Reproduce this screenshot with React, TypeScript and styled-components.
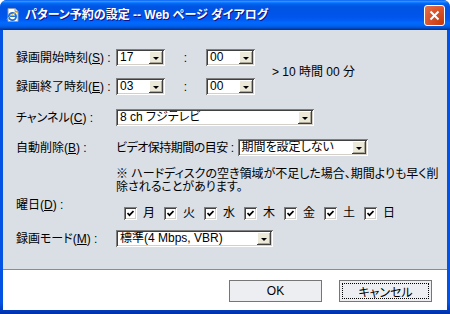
import React from "react";
import styled, { createGlobalStyle } from "styled-components";

const Global = createGlobalStyle`
  html, body { margin: 0; padding: 0; background: #ffffff; }
  body {
    font-family: "Liberation Sans", "Noto Sans CJK JP", sans-serif;
    font-size: 12px;
    color: #000;
  }
  * { box-sizing: border-box; }
`;

const Window = styled.div`
  width: 450px;
  height: 314px;
  display: flex;
  flex-direction: column;
  border-radius: 7px 7px 0 0;
  overflow: hidden;
  background: #0553e3;
`;

const TitleBar = styled.div`
  height: 30px;
  flex: none;
  display: flex;
  align-items: center;
  padding: 0 5px 0 5px;
  background: linear-gradient(
    to bottom,
    #0058ee 0%,
    #3593ff 4%,
    #288eff 6%,
    #127dff 8%,
    #036ffc 10%,
    #0262ee 14%,
    #0057e5 20%,
    #0054e3 24%,
    #0055eb 56%,
    #005bf5 66%,
    #026afe 76%,
    #0062ef 86%,
    #0052d6 92%,
    #0040ab 96%,
    #003092 100%
  );
`;

const TitleText = styled.div`
  flex: 1;
  margin-left: 4px;
  color: #fff;
  font-weight: bold;
  font-size: 12px;
  line-height: 14px;
  white-space: pre;
  font-feature-settings: "palt";
  text-shadow: 1px 1px #0f1089;
`;

const CloseButton = styled.div`
  width: 21px;
  height: 21px;
  flex: none;
  border: 1px solid #fff;
  border-radius: 3px;
  background: radial-gradient(circle at 90% 90%, #c83c0c 0%, #d9532a 55%, #e2744e 100%);
  display: flex;
  align-items: center;
  justify-content: center;
`;

const Frame = styled.div`
  flex: 1;
  display: flex;
  padding: 0 3px 4px 3px;
  background: linear-gradient(to bottom, #0553e3 0%, #0553e3 96%, #0030a8 100%);
`;

const Client = styled.div`
  flex: 1;
  display: flex;
  flex-direction: column;
  background: #dadee5;
`;

const Content = styled.div`
  flex: 1;
  display: flex;
  flex-direction: column;
  padding: 19px 0 0 13px;
`;

const TimeGrid = styled.div`
  display: grid;
  grid-template-columns: 100px 49px 41px 49px auto;
  grid-template-rows: 17px 17px;
  row-gap: 12px;
  align-items: center;
`;

const Label = styled.div<{ $w?: number; $tight?: boolean }>`
  width: ${(p) => (p.$w ? `${p.$w}px` : "auto")};
  flex: none;
  white-space: nowrap;
  line-height: 14px;
  font-feature-settings: "palt";
  letter-spacing: ${(p) => (p.$tight ? "-0.5px" : "normal")};
  margin-right: ${(p) => (p.$tight ? "4px" : "0")};
`;

const Colon = styled.span`
  justify-self: center;
  line-height: 14px;
`;

const Summary = styled.div`
  grid-column: 5;
  grid-row: 1 / span 2;
  padding-left: 17px;
  white-space: nowrap;
  line-height: 14px;
`;

const Row = styled.div<{ $top: number; $align?: string }>`
  display: flex;
  align-items: ${(p) => p.$align ?? "center"};
  margin-top: ${(p) => p.$top}px;
`;

const SelectBox = styled.div<{ $w: number }>`
  width: ${(p) => p.$w}px;
  height: 17px;
  flex: none;
  display: flex;
  align-items: center;
  background: #fff;
  padding: 2px;
  box-shadow: inset 1px 1px #808080, inset -1px -1px #ffffff,
    inset 2px 2px #404040, inset -2px -2px #d4d0c8;
`;

const SelectValue = styled.span`
  flex: 1;
  padding-left: 2px;
  white-space: nowrap;
  overflow: hidden;
  line-height: 13px;
  font-feature-settings: "palt";
`;

const DropButton = styled.span`
  width: 14px;
  height: 13px;
  flex: none;
  background: #ece9d8;
  display: flex;
  align-items: center;
  justify-content: center;
  box-shadow: inset -1px -1px #404040, inset 1px 1px #ffffff,
    inset -2px -2px #aca899;
  &::after {
    content: "";
    border-left: 3px solid transparent;
    border-right: 3px solid transparent;
    border-top: 3px solid #000;
    margin-top: 1px;
  }
`;

const Note = styled.div`
  margin-top: 12px;
  padding-left: 100px;
  line-height: 13px;
  white-space: nowrap;
  font-feature-settings: "palt";
`;

const Days = styled.div`
  display: flex;
  padding: 9px 0 0 8px;
`;

const DayItem = styled.label`
  width: 40px;
  flex: none;
  display: flex;
  align-items: center;
  gap: 6px;
  line-height: 13px;
`;

const CheckBox = styled.span`
  width: 13px;
  height: 13px;
  flex: none;
  background: #fff;
  display: flex;
  align-items: center;
  justify-content: center;
  box-shadow: inset 1px 1px #808080, inset -1px -1px #ffffff,
    inset 2px 2px #404040, inset -2px -2px #d4d0c8;
`;

const Footer = styled.div`
  height: 41px;
  flex: none;
  border-top: 1px solid #8a8c90;
  background: #ffffff;
  display: flex;
  justify-content: flex-end;
  align-items: flex-start;
  gap: 17px;
  padding: 10px 15px 0 0;
`;

const Button = styled.div<{ $focus?: boolean }>`
  width: 93px;
  height: 22px;
  display: flex;
  align-items: center;
  justify-content: center;
  border: 1px solid #767676;
  background: #eceef2;
  font-feature-settings: "palt";
  outline: ${(p) => (p.$focus ? "1px dotted #000" : "none")};
  outline-offset: -4px;
`;

const Select: React.FC<{ w: number; value: string }> = ({ w, value }) => (
  <SelectBox $w={w}>
    <SelectValue>{value}</SelectValue>
    <DropButton />
  </SelectBox>
);

const Check: React.FC<{ day: string }> = ({ day }) => (
  <DayItem>
    <CheckBox>
      <svg width="7" height="7" viewBox="0 0 7 7">
        <path d="M0.5 3 L2.5 5.2 L6.5 1" stroke="#000" strokeWidth="1.7" fill="none" />
      </svg>
    </CheckBox>
    <span>{day}</span>
  </DayItem>
);

const IeIcon = () => (
  <svg width="16" height="16" viewBox="0 0 16 16">
    <path d="M3 1.5 H10 L13 4.5 V14.5 H3 Z" fill="#fff" stroke="#8a9bb8" strokeWidth="1" />
    <path d="M10 1.5 V4.5 H13" fill="#dfe6f2" stroke="#8a9bb8" strokeWidth="1" />
    <circle cx="7.5" cy="9.5" r="3.6" fill="none" stroke="#1d6fd6" strokeWidth="1.8" />
    <path d="M4.5 9.3 H11" stroke="#1d6fd6" strokeWidth="1.4" />
    <path d="M2 12.5 C4 9 10 5 13 5.5" stroke="#f0b400" strokeWidth="1" fill="none" />
  </svg>
);

const U = styled.span`
  text-decoration: underline;
`;

export default function App() {
  return (
    <>
      <Global />
      <Window>
        <TitleBar>
          <IeIcon />
          <TitleText>{"パターン予約の設定 -- Web ページ ダイアログ"}</TitleText>
          <CloseButton>
            <svg width="11" height="11" viewBox="0 0 11 11">
              <path d="M1.5 1.5 L9.5 9.5 M9.5 1.5 L1.5 9.5" stroke="#fff" strokeWidth="2" />
            </svg>
          </CloseButton>
        </TitleBar>
        <Frame>
          <Client>
            <Content>
              <TimeGrid>
                <Summary>&gt; 10 時間 00 分</Summary>
                <Label>
                  録画開始時刻(<U>S</U>) :
                </Label>
                <Select w={49} value="17" />
                <Colon>:</Colon>
                <Select w={49} value="00" />
                <Label>
                  録画終了時刻(<U>E</U>) :
                </Label>
                <Select w={49} value="03" />
                <Colon>:</Colon>
                <Select w={49} value="00" />
              </TimeGrid>

              <Row $top={14}>
                <Label $w={100}>
                  チャンネル(<U>C</U>) :
                </Label>
                <Select w={198} value="8 ch フジテレビ" />
              </Row>

              <Row $top={13}>
                <Label $w={100}>
                  自動削除(<U>B</U>) :
                </Label>
                <Label $tight>ビデオ保持期間の目安 :</Label>
                <Select w={130} value="期間を設定しない" />
              </Row>

              <Note>
                ※ ハードディスクの空き領域が不足した場合、期間よりも早く削
                <br />
                除されることがあります。
              </Note>

              <Row $top={4} $align="flex-start">
                <Label $w={100}>
                  曜日(<U>D</U>) :
                </Label>
                <Days>
                  {["月", "火", "水", "木", "金", "土", "日"].map((d) => (
                    <Check key={d} day={d} />
                  ))}
                </Days>
              </Row>

              <Row $top={10}>
                <Label $w={100}>
                  録画モード(<U>M</U>) :
                </Label>
                <Select w={157} value="標準(4 Mbps, VBR)" />
              </Row>
            </Content>
            <Footer>
              <Button>OK</Button>
              <Button $focus>キャンセル</Button>
            </Footer>
          </Client>
        </Frame>
      </Window>
    </>
  );
}
